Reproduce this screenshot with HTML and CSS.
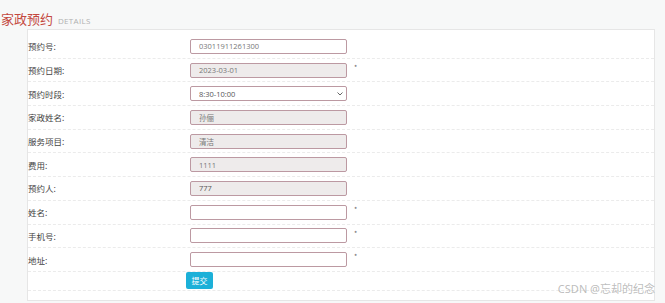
FILE: index.html
```html
<!DOCTYPE html>
<html lang="zh">
<head>
    <meta charset="UTF-8">
    <title>家政预约</title>
    <link rel="stylesheet" href="styles.css">
</head>
<body>

<div class="title">
    <h2>家政预约</h2>
    <span class="sub">DETAILS</span>
</div>

<div class="panel">
    <div class="row">
        <label>预约号:</label>
        <input type="text" value="03011911261300">
    </div>
    <div class="row">
        <label>预约日期:</label>
        <input type="text" class="ro" value="2023-03-01" readonly>
        <span class="star">*</span>
    </div>
    <div class="row">
        <label>预约时段:</label>
        <select>
            <option>8:30-10:00</option>
        </select>
    </div>
    <div class="row">
        <label>家政姓名:</label>
        <input type="text" class="ro" value="孙俪" readonly>
    </div>
    <div class="row">
        <label>服务项目:</label>
        <input type="text" class="ro" value="清洁" readonly>
    </div>
    <div class="row">
        <label>费用:</label>
        <input type="text" class="ro" value="1111" readonly>
    </div>
    <div class="row">
        <label>预约人:</label>
        <input type="text" class="ro dark" value="777" readonly>
    </div>
    <div class="row">
        <label>姓名:</label>
        <input type="text">
        <span class="star">*</span>
    </div>
    <div class="row">
        <label>手机号:</label>
        <input type="text">
        <span class="star">*</span>
    </div>
    <div class="row">
        <label>地址:</label>
        <input type="text">
        <span class="star">*</span>
    </div>
    <div class="row last">
        <button class="btn">提交</button>
    </div>
</div>

<div class="mark">CSDN @忘却的纪念</div>

</body>
</html>
```

FILE: styles.css
```css
body {
    margin: 0;
    background: #f7f8f8;
    font-family: "Noto Sans CJK SC", "Noto Sans", sans-serif;
    width: 665px;
    height: 303px;
    overflow: hidden;
    position: relative;
}
.title {
    height: 29px;
    padding-left: 1px;
    display: flex;
    align-items: baseline;
    box-sizing: border-box;
    padding-top: 11px;
}
.title h2 {
    margin: 0;
    font-size: 13px;
    font-weight: normal;
    color: #c4483f;
    line-height: 16px;
}
.title .sub {
    margin-left: 5px;
    font-family: "Open Sans", sans-serif;
    font-size: 8px;
    color: #b0b0b0;
    letter-spacing: 0.3px;
}
.panel {
    margin-left: 27px;
    width: 628px;
    height: 272px;
    background: #fff;
    border: 1px solid #e6e6e6;
    padding-top: 5px;
    box-sizing: border-box;
}
.row {
    display: flex;
    align-items: center;
    height: 23.7px;
    border-bottom: 1px dashed #ebebeb;
    box-sizing: border-box;
}
.row label {
    width: 162px;
    font-size: 8.5px;
    color: #444;
}
.row input, .row select {
    width: 157px;
    height: 15px;
    box-sizing: border-box;
    border: 1px solid #bc99a2;
    border-radius: 2px;
    font-family: "Open Sans", "Noto Sans CJK SC", sans-serif;
    font-size: 7.5px;
    color: #777;
    padding: 0 0 0 8px;
    background: #fff;
    outline: none;
}
.row input.ro {
    background: #eeebeb;
}
.row input.dark {
    color: #555;
}
.row select {
    appearance: none;
    -webkit-appearance: none;
    color: #555;
    background: #fff url("data:image/svg+xml,%3Csvg xmlns='http://www.w3.org/2000/svg' width='6' height='4'%3E%3Cpath d='M0.5 0.5 L3 3 L5.5 0.5' fill='none' stroke='%23666' stroke-width='1'/%3E%3C/svg%3E") no-repeat right 3px center;
}
.star {
    align-self: flex-start;
    margin-top: 3px;
    margin-left: 7px;
    font-size: 7px;
    color: #666;
}
.row.last {
    height: 19px;
    align-items: flex-end;
    padding-bottom: 1px;
}
.btn {
    margin-left: 158px;
    width: 27px;
    height: 17px;
    padding: 0;
    background: #1cb0d8;
    color: #fff;
    border: none;
    border-radius: 2px;
    font-family: "Noto Sans CJK SC", sans-serif;
    font-size: 8px;
}
.mark {
    position: absolute;
    right: 10px;
    bottom: 7px;
    font-family: "Noto Sans", "Noto Sans CJK SC", sans-serif;
    font-size: 11px;
    color: rgba(160, 160, 160, 0.7);
}
```
